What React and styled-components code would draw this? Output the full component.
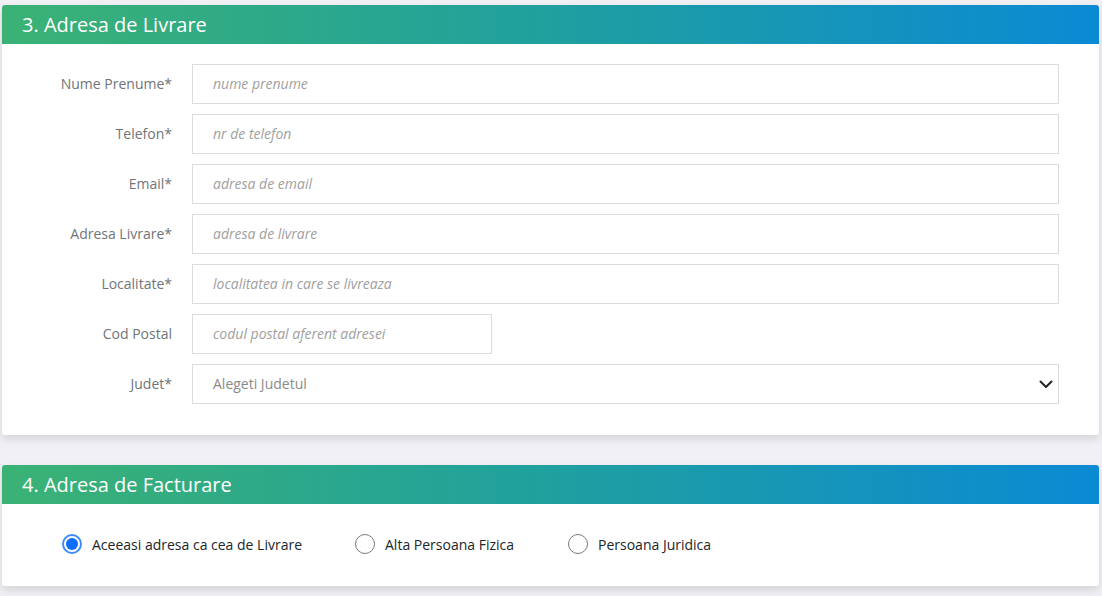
import React from "react";
import styled, { createGlobalStyle } from "styled-components";

const Global = createGlobalStyle`
  html, body { margin: 0; padding: 0; background: #f1f1f5; }
  body { font-family: "Open Sans", "Noto Sans", sans-serif; }
  * { box-sizing: border-box; }
`;

const Page = styled.div`
  display: flex;
  flex-direction: column;
  gap: 30px;
  padding: 5px 3px 10px 2px;
`;

const Card = styled.section`
  background: #fff;
  border-radius: 3px;
  box-shadow: 0 4px 8px rgba(0, 0, 0, 0.12);
  overflow: hidden;
`;

const Header = styled.h2`
  margin: 0;
  height: 39px;
  display: flex;
  align-items: center;
  padding-left: 20px;
  color: #fff;
  font-size: 20px;
  font-weight: 400;
  background: linear-gradient(90deg, #3bb274 0%, #22a29a 45%, #0b8ad4 100%);
`;

const FormBody = styled.div`
  display: flex;
  flex-direction: column;
  gap: 10px;
  padding: 20px 40px 31px 0;
`;

const Row = styled.div`
  display: grid;
  grid-template-columns: 170px 1fr;
  column-gap: 20px;
  align-items: center;
`;

const Label = styled.label`
  text-align: right;
  font-size: 14px;
  line-height: 20px;
  padding-bottom: 1px;
  color: #6f7479;
`;

const Input = styled.input`
  height: 40px;
  width: ${(p) => p.$width || "100%"};
  border: 1px solid #dcdcdc;
  border-radius: 0;
  padding: 0 20px 1px;
  font-family: inherit;
  font-size: 14px;
  color: #333;
  outline: none;
  &::placeholder {
    color: #a0a0a0;
    font-style: italic;
  }
`;

const SelectWrap = styled.div`
  position: relative;
  height: 40px;
  border: 1px solid #dcdcdc;
  display: flex;
  align-items: center;
  padding: 0 20px 1px;
  font-size: 14px;
  color: #8a8a8a;
`;

const Chevron = styled.svg`
  position: absolute;
  right: 4px;
  top: 50%;
  transform: translateY(-50%);
`;

const RadioBody = styled.div`
  display: flex;
  align-items: center;
  padding: 30px 0 32px 60px;
`;

const RadioItem = styled.label`
  display: flex;
  align-items: center;
  gap: 10px;
  font-size: 14px;
  color: #212529;
  width: ${(p) => p.$w};
`;

const Circle = styled.span`
  width: 20px;
  height: 20px;
  border-radius: 50%;
  border: ${(p) => (p.$checked ? "2px solid #3d8bfd" : "1px solid #7a7a7a")};
  display: flex;
  align-items: center;
  justify-content: center;
  &::after {
    content: "";
    display: ${(p) => (p.$checked ? "block" : "none")};
    width: 12px;
    height: 12px;
    border-radius: 50%;
    background: #0d6efd;
  }
`;

const fields = [
  ["Nume Prenume*", "nume prenume"],
  ["Telefon*", "nr de telefon"],
  ["Email*", "adresa de email"],
  ["Adresa Livrare*", "adresa de livrare"],
  ["Localitate*", "localitatea in care se livreaza"],
  ["Cod Postal", "codul postal aferent adresei", "300px"],
];

export default function App() {
  return (
    <>
      <Global />
      <Page>
        <Card>
          <Header>3. Adresa de Livrare</Header>
          <FormBody>
            {fields.map(([l, p, w]) => (
              <Row key={l}>
                <Label>{l}</Label>
                <Input placeholder={p} $width={w} />
              </Row>
            ))}
            <Row>
              <Label>Judet*</Label>
              <SelectWrap>
                Alegeti Judetul
                <Chevron width="16" height="16" viewBox="0 0 16 16">
                  <path d="M2.5 5.5 L8 11 L13.5 5.5" fill="none" stroke="#222" strokeWidth="2" strokeLinecap="round" strokeLinejoin="round" />
                </Chevron>
              </SelectWrap>
            </Row>
          </FormBody>
        </Card>
        <Card>
          <Header>4. Adresa de Facturare</Header>
          <RadioBody>
            <RadioItem $w="293px"><Circle $checked />Aceeasi adresa ca cea de Livrare</RadioItem>
            <RadioItem $w="213px"><Circle />Alta Persoana Fizica</RadioItem>
            <RadioItem $w="auto"><Circle />Persoana Juridica</RadioItem>
          </RadioBody>
        </Card>
      </Page>
    </>
  );
}
